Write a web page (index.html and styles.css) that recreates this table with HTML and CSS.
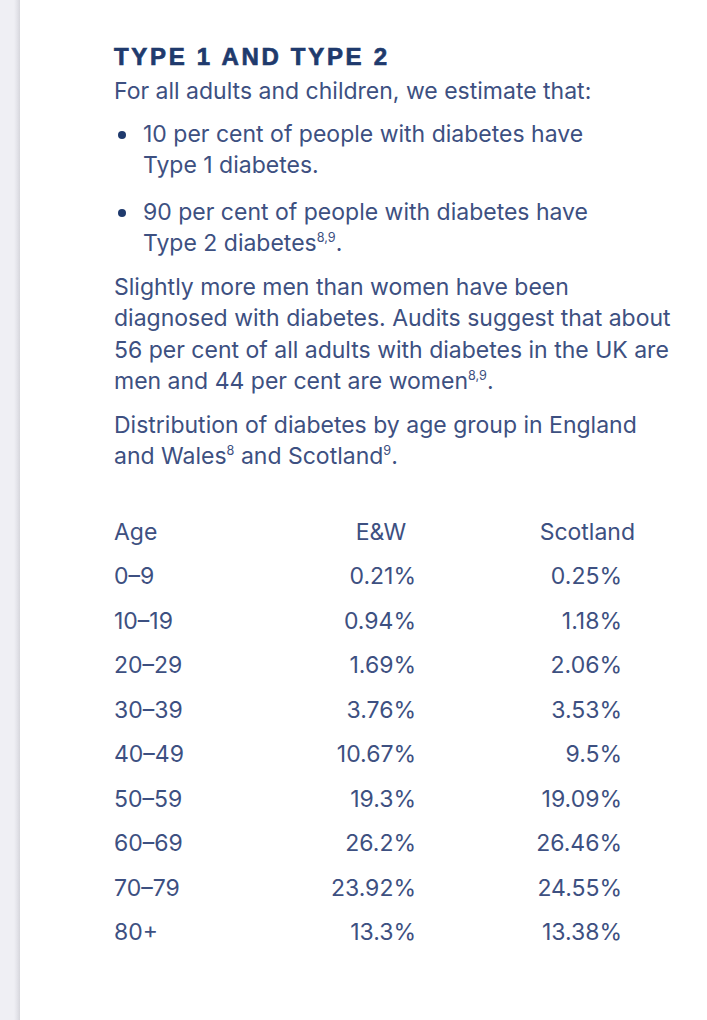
FILE: index.html
```html
<!DOCTYPE html>
<html lang="en">
<head>
<meta charset="utf-8">
<title>Type 1 and Type 2</title>
<link rel="stylesheet" href="styles.css">
</head>
<body>
<div class="page">
  <div class="edge"></div>
  <main class="content">
    <h1 class="title">TYPE 1 AND TYPE 2</h1>
    <p class="intro">For all adults and children, we estimate that:</p>
    <ul class="bullets">
      <li class="bullet">10 per cent of people with diabetes have<br>Type 1 diabetes.</li>
      <li class="bullet">90 per cent of people with diabetes have<br>Type 2 diabetes<sup class="ref">8,9</sup>.</li>
    </ul>
    <p class="para">Slightly more men than women have been<br>diagnosed with diabetes. Audits suggest that about<br>56 per cent of all adults with diabetes in the UK are<br>men and 44 per cent are women<sup class="ref">8,9</sup>.</p>
    <p class="para">Distribution of diabetes by age group in England<br>and Wales<sup class="ref">8</sup> and Scotland<sup class="ref">9</sup>.</p>

    <div class="table">
      <div class="cell head age">Age</div>
      <div class="cell head ew">E&amp;W</div>
      <div class="cell head sc">Scotland</div>

      <div class="cell age">0–9</div><div class="cell ew val">0.21%</div><div class="cell sc val">0.25%</div>
      <div class="cell age">10–19</div><div class="cell ew val">0.94%</div><div class="cell sc val">1.18%</div>
      <div class="cell age">20–29</div><div class="cell ew val">1.69%</div><div class="cell sc val">2.06%</div>
      <div class="cell age">30–39</div><div class="cell ew val">3.76%</div><div class="cell sc val">3.53%</div>
      <div class="cell age">40–49</div><div class="cell ew val">10.67%</div><div class="cell sc val">9.5%</div>
      <div class="cell age">50–59</div><div class="cell ew val">19.3%</div><div class="cell sc val">19.09%</div>
      <div class="cell age">60–69</div><div class="cell ew val">26.2%</div><div class="cell sc val">26.46%</div>
      <div class="cell age">70–79</div><div class="cell ew val">23.92%</div><div class="cell sc val">24.55%</div>
      <div class="cell age">80+</div><div class="cell ew val">13.3%</div><div class="cell sc val">13.38%</div>
    </div>
  </main>
</div>
</body>
</html>
```

FILE: styles.css
```css
html, body {
  margin: 0;
  padding: 0;
  background: #ffffff;
}

.page {
  display: flex;
  min-height: 1020px;
}

.edge {
  width: 20px;
  flex: 0 0 20px;
  background: linear-gradient(to right, #efeff4 0, #efeff4 14px, #e4e4ea 17px, #d6d6dc 20px);
}

.content {
  flex: 1;
  padding: 44px 0 0 94px;
  font-family: Inter, "Liberation Sans", Arial, sans-serif;
  font-weight: 400;
  font-size: 23px;
  line-height: 31.5px;
  color: #3d5081;
}

.title {
  margin: 0;
  font-family: "Liberation Sans", Arial, sans-serif;
  font-weight: 700;
  font-size: 24px;
  line-height: 26px;
  letter-spacing: 2.7px;
  -webkit-text-stroke: 0.7px #1f3a6d;
  color: #1f3a6d;
}

.intro {
  margin: 6px 0 11px;
}

.bullets {
  list-style: none;
  display: flex;
  flex-direction: column;
  gap: 15px;
  margin: 0 0 12px;
  padding: 0;
}

.bullet {
  position: relative;
  padding-left: 29px;
}

.bullet::before {
  content: "";
  position: absolute;
  left: 4px;
  top: 12px;
  width: 8px;
  height: 8px;
  border-radius: 50%;
  background: #1f3a6d;
}

.para {
  margin: 0 0 12px;
}

.ref {
  font-size: 0.55em;
  line-height: 0;
  vertical-align: 0.7em;
}

.table {
  display: grid;
  grid-template-columns: 216px 102px 203px;
  grid-auto-rows: 44.5px;
  margin-top: 37px;
  width: 521px;
}

.cell {
  line-height: 44.5px;
  white-space: nowrap;
}

.head.ew {
  text-align: center;
}

.head.sc {
  text-align: right;
}

.val.ew {
  text-align: right;
  padding-right: 16px;
}

.val.sc {
  text-align: right;
  padding-right: 13px;
}
```
